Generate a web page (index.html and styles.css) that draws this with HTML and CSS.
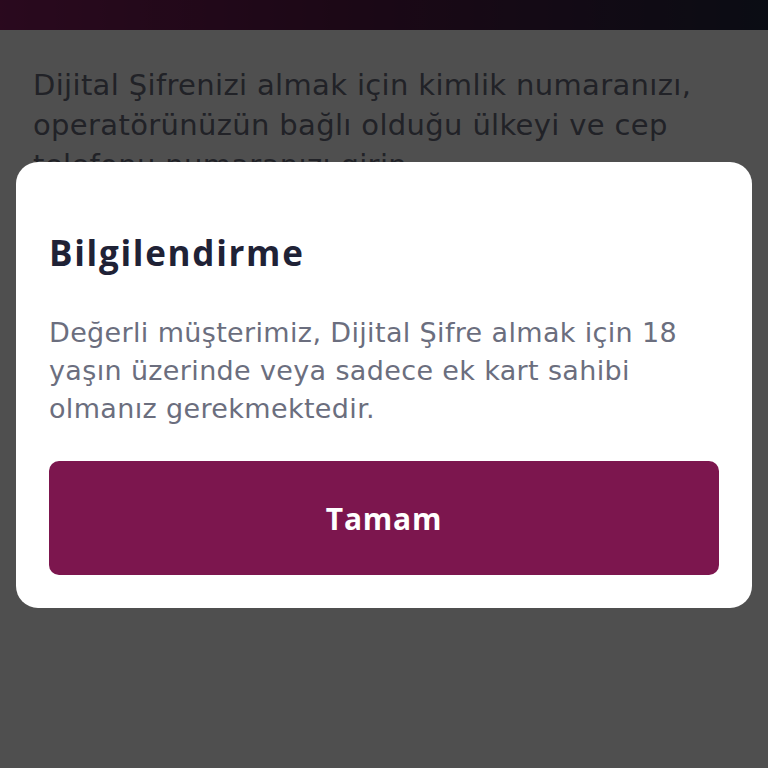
FILE: index.html
```html
<!DOCTYPE html>
<html lang="tr">
<head>
<meta charset="utf-8">
<link rel="stylesheet" href="styles.css">
</head>
<body>
<div class="screen">
  <div class="topbar"></div>
  <p class="intro">Dijital Şifrenizi almak için kimlik numaranızı, operatörünüzün bağlı olduğu ülkeyi ve cep telefonu numaranızı girin.</p>
  <div class="overlay">
    <div class="dialog">
      <h1 class="title">Bilgilendirme</h1>
      <p class="message">Değerli müşterimiz, Dijital Şifre almak için 18 yaşın üzerinde veya sadece ek kart sahibi olmanız gerekmektedir.</p>
      <button class="btn">Tamam</button>
    </div>
  </div>
</div>
</body>
</html>
```
FILE: styles.css
```css
html, body {
  margin: 0;
  padding: 0;
}
body {
  width: 768px;
  height: 768px;
  overflow: hidden;
  font-family: "Open Sans", "Noto Sans", sans-serif;
  background: #ffffff;
}
.screen {
  position: relative;
  width: 768px;
  height: 768px;
  background: #ffffff;
}
.topbar {
  height: 30px;
  background: linear-gradient(90deg, #871f61 0%, #5a1a48 45%, #232a41 100%);
}
.intro {
  margin: 0;
  padding: 35px 40px 0 33px;
  font-family: "DejaVu Sans", sans-serif;
  font-size: 29px;
  line-height: 40px;
  font-weight: 400;
  letter-spacing: 0.35px;
  color: #6b6e7e;
}
.overlay {
  position: absolute;
  inset: 0;
  background: rgba(0, 0, 0, 0.69);
  display: flex;
  flex-direction: column;
  align-items: center;
  padding-top: 162px;
  box-sizing: border-box;
}
.dialog {
  width: 736px;
  box-sizing: border-box;
  background: #ffffff;
  border-radius: 22px;
  padding: 66px 33px 33px 33px;
}
.title {
  margin: 0;
  font-size: 35px;
  line-height: 50px;
  font-weight: 700;
  letter-spacing: 1.7px;
  color: #1f2236;
}
.message {
  margin: 36px 0 0 0;
  padding-right: 20px;
  font-family: "DejaVu Sans", sans-serif;
  font-size: 27px;
  line-height: 38px;
  letter-spacing: 0.35px;
  color: #6b6e7e;
}
.btn {
  display: block;
  width: 100%;
  height: 114px;
  margin-top: 33px;
  border: none;
  border-radius: 10px;
  background: #7c164e;
  color: #ffffff;
  font-family: inherit;
  font-size: 30px;
  font-weight: 700;
  letter-spacing: 0.8px;
}
```
